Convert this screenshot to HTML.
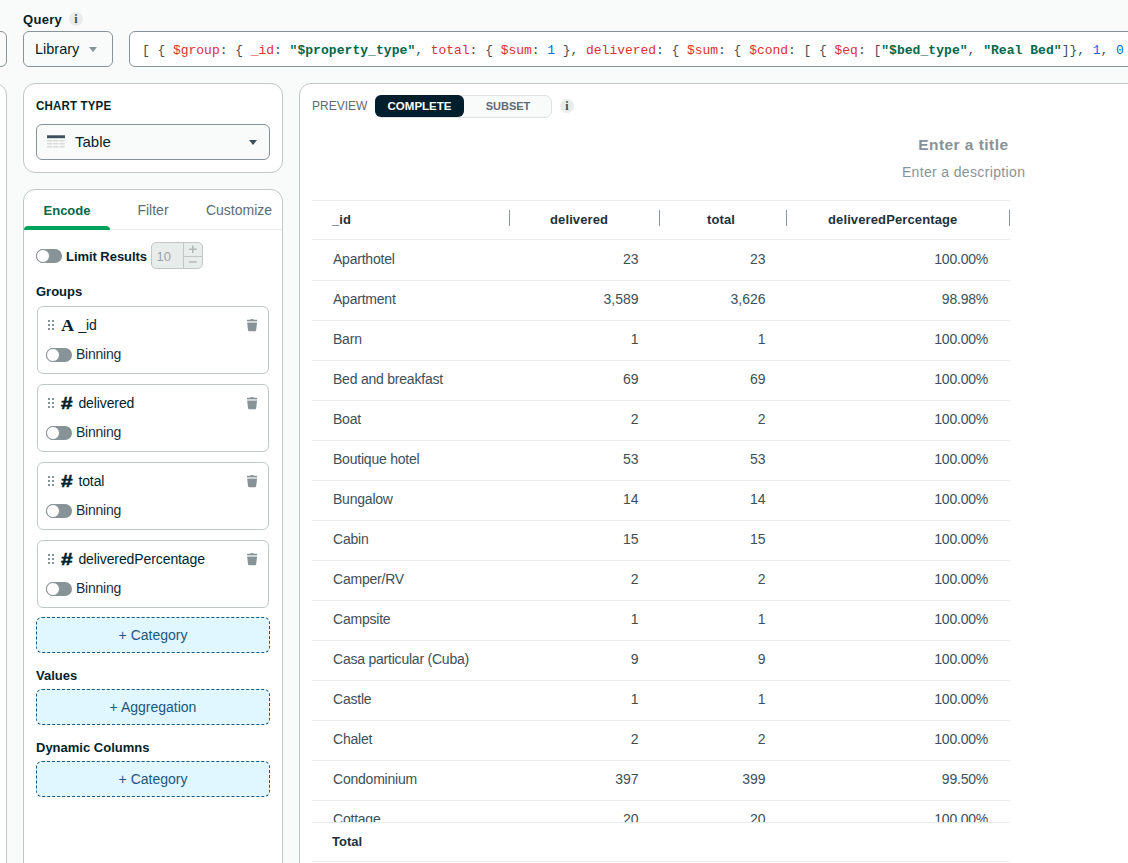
<!DOCTYPE html>
<html><head><meta charset="utf-8">
<style>
*{box-sizing:border-box;margin:0;padding:0}
html,body{width:1128px;height:863px;overflow:hidden;background:#f9fbfa;font-family:"Liberation Sans",sans-serif;color:#001e2b}
.abs{position:absolute}
.box{position:absolute;background:#fff;border:1px solid #889397}
.card{position:absolute;background:#fff;border:1px solid #c1c7c6;border-radius:12px}
.mono{font-family:"Liberation Mono",monospace}
.r{color:#db3030}.g{color:#00684a;font-weight:bold;letter-spacing:0.055px}.b{color:#016bf8}.k{color:#3d4f58}
.lbl{position:absolute;font-weight:bold;font-size:13px;line-height:16px;color:#001e2b;white-space:nowrap}
.tg{position:absolute;width:26px;height:14px;border-radius:7px;background:#889397}
.tg i{position:absolute;left:0;top:0;width:14px;height:14px;border-radius:7px;background:#fff;border:1px solid #889397}
.fc{position:absolute;left:37px;width:232px;height:68px;border:1px solid #c1c7c6;border-radius:6px;background:#fff}
.fc .nm{position:absolute;top:10px;font-size:14px;line-height:17px;color:#001e2b;white-space:nowrap}
.fc .bn{position:absolute;left:38px;top:39px;font-size:14px;letter-spacing:-0.25px;line-height:17px;color:#1c2d38}
.fc .tg{left:8px;top:41px}
.fc .dh{position:absolute;left:10px;top:13px;width:6px;height:10px;background:radial-gradient(circle at 1px 1px,#889397 1.1px,transparent 1.3px) 0 0/4px 4px}
.fc .tr{position:absolute;left:208.8px;top:12.1px}
.fc .ty{position:absolute;left:23px;top:9px;font-weight:bold;font-size:16px;line-height:18px;color:#001e2b;transform-origin:0 50%}
.fc .hs{transform:scaleX(1.3);top:10px;left:22.5px;-webkit-text-stroke:0.5px #001e2b}
.drop{position:absolute;left:36px;width:234px;height:36px;border:1px dashed #1a567e;border-radius:6px;background:#e1f7ff;color:#1a567e;font-size:14px;line-height:34px;text-align:center}
.row{position:absolute;left:312px;width:698px;height:41px;border-bottom:1px solid #e8edeb;font-size:14px;line-height:38px;color:#3d4f58;letter-spacing:-0.22px}
.row span{position:absolute;top:0;white-space:nowrap}
.row .c1{left:21px}.row .c2{right:371.5px;letter-spacing:0}.row .c3{right:244.5px;letter-spacing:0}.row .c4{right:22px}
.hd{font-weight:bold;color:#21313c;font-size:13px}
</style></head><body>

<!-- top bar -->
<div class="lbl" style="left:23px;top:12px;letter-spacing:0.3px">Query</div>
<div class="abs" style="left:69px;top:12px;width:14px;height:14px;border-radius:7px;background:#e8edeb;color:#3d4f58;font:bold 12px/14px 'Liberation Serif',serif;text-align:center">i</div>
<div class="box" style="left:-10px;top:31px;width:17px;height:36px;border-radius:6px;background:#f9fbfa"></div>
<div class="box" style="left:23px;top:31px;width:90px;height:36px;border-radius:6px;background:#f9fbfa"></div>
<div class="abs" style="left:35px;top:41px;font-size:14.5px;line-height:17px;color:#001e2b">Library</div>
<div class="abs" style="left:89px;top:47px;width:0;height:0;border-left:4.5px solid transparent;border-right:4.5px solid transparent;border-top:5px solid #889397"></div>
<div class="box" style="left:129px;top:31px;width:1010px;height:36px;border-radius:6px"></div>
<div class="abs mono k" style="left:142px;top:43px;font-size:13px;line-height:16px;white-space:pre;letter-spacing:-0.038px">[ { <span class="r">$group</span>: { <span class="r">_id</span>: <span class="g">"$property_type"</span>, <span class="r">total</span>: { <span class="r">$sum</span>: <span class="b">1</span> }, <span class="r">delivered</span>: { <span class="r">$sum</span>: { <span class="r">$cond</span>: [ { <span class="r">$eq</span>: [<span class="g">"$bed_type"</span>, <span class="g">"Real Bed"</span>]}, <span class="b">1</span>, <span class="b">0</span> ] } } } }</div>

<!-- left partial panel -->
<div class="card" style="left:-20px;top:83px;width:27px;height:800px"></div>

<!-- chart type card -->
<div class="card" style="left:23px;top:83px;width:260px;height:90px"></div>
<div class="lbl" style="left:36px;top:98px;font-size:13px;letter-spacing:0.2px;transform:scaleX(0.885);transform-origin:0 0">CHART TYPE</div>
<div class="box" style="left:36px;top:124px;width:234px;height:36px;border-radius:6px;background:#f9fbfa"></div>
<svg class="abs" style="left:47px;top:135px" width="18" height="14" viewBox="0 0 18 14"><rect x="0" y="0.3" width="18" height="2.9" fill="#3d4f58"/><g fill="#d3d9d7"><rect x="0" y="5" width="5.3" height="1.5"/><rect x="6.2" y="5" width="5.3" height="1.5"/><rect x="12.4" y="5" width="5.3" height="1.5"/><rect x="0" y="8" width="5.3" height="1.5"/><rect x="6.2" y="8" width="5.3" height="1.5"/><rect x="12.4" y="8" width="5.3" height="1.5"/><rect x="0" y="11" width="5.3" height="1.5"/><rect x="6.2" y="11" width="5.3" height="1.5"/><rect x="12.4" y="11" width="5.3" height="1.5"/></g></svg>
<div class="abs" style="left:75px;top:133px;font-size:15px;line-height:18px;color:#001e2b">Table</div>
<div class="abs" style="left:249px;top:140px;width:0;height:0;border-left:4.5px solid transparent;border-right:4.5px solid transparent;border-top:5.5px solid #3d4f58"></div>

<!-- encode card -->
<div class="card" style="left:23px;top:189px;width:260px;height:700px"></div>
<div class="abs" style="left:24px;top:229px;width:258px;height:1px;background:#e8edeb"></div>
<div class="abs" style="left:24px;top:226px;width:86px;height:4px;background:#00a35c;border-radius:4px 4px 0 0"></div>
<div class="abs" style="left:24px;top:202px;width:86px;text-align:center;font-size:13px;line-height:17px;color:#00684a;font-weight:bold">Encode</div>
<div class="abs" style="left:110px;top:202px;width:86px;text-align:center;font-size:14px;line-height:17px;color:#5c6c75">Filter</div>
<div class="abs" style="left:196px;top:202px;width:86px;text-align:center;font-size:14px;line-height:17px;color:#5c6c75">Customize</div>

<div class="tg" style="left:36px;top:249px"><i></i></div>
<div class="lbl" style="left:66px;top:248px;font-size:13px;line-height:17px;letter-spacing:-0.05px">Limit Results</div>
<div class="abs" style="left:151px;top:242px;width:52px;height:27px;border:1px solid #c1c7c6;border-radius:5px;background:#e8edeb"></div>
<div class="abs" style="left:183px;top:243px;width:1px;height:25px;background:#c1c7c6"></div>
<div class="abs" style="left:183px;top:255.5px;width:19px;height:1px;background:#c1c7c6"></div>
<div class="abs" style="left:156.5px;top:249px;font-size:13px;line-height:15px;color:#9aa4a5">10</div>
<svg class="abs" style="left:188px;top:245px" width="10" height="20" viewBox="0 0 10 20"><path d="M1 4.3h7.6M4.8 0.6v7.4M1 17h7.6" stroke="#b0b8b8" stroke-width="1.6" fill="none"/></svg>


<div class="lbl" style="left:36px;top:284px">Groups</div>

<div class="fc" style="top:306px"><i class="dh"></i><span class="ty" style="font-family:'Liberation Serif',serif;font-size:16px;left:22.5px;top:10px;transform:scaleX(1.13)">A</span><svg class="tr" width="11" height="13" viewBox="0 0 11 13"><path fill="#889397" d="M0 2.3V1.3Q0 .8.5 .8H3Q3.6 0 5.1 0T7.2 .8H9.7Q10.2 .8 10.2 1.3V2.3Z"/><rect x=".1" y="2.3" width="10" height="1.7" fill="#cbd1d3"/><path fill="#889397" d="M.2 4H10L9.2 11Q9.1 12.2 8 12.2H2.2Q1.1 12.2 1 11Z"/></svg><span class="nm" style="left:40.4px;letter-spacing:-0.1px">_id</span><div class="tg"><i></i></div><span class="bn">Binning</span></div>
<div class="fc" style="top:384px"><i class="dh"></i><span class="ty hs">#</span><svg class="tr" width="11" height="13" viewBox="0 0 11 13"><path fill="#889397" d="M0 2.3V1.3Q0 .8.5 .8H3Q3.6 0 5.1 0T7.2 .8H9.7Q10.2 .8 10.2 1.3V2.3Z"/><rect x=".1" y="2.3" width="10" height="1.7" fill="#cbd1d3"/><path fill="#889397" d="M.2 4H10L9.2 11Q9.1 12.2 8 12.2H2.2Q1.1 12.2 1 11Z"/></svg><span class="nm" style="left:40.4px;letter-spacing:-0.1px">delivered</span><div class="tg"><i></i></div><span class="bn">Binning</span></div>
<div class="fc" style="top:462px"><i class="dh"></i><span class="ty hs">#</span><svg class="tr" width="11" height="13" viewBox="0 0 11 13"><path fill="#889397" d="M0 2.3V1.3Q0 .8.5 .8H3Q3.6 0 5.1 0T7.2 .8H9.7Q10.2 .8 10.2 1.3V2.3Z"/><rect x=".1" y="2.3" width="10" height="1.7" fill="#cbd1d3"/><path fill="#889397" d="M.2 4H10L9.2 11Q9.1 12.2 8 12.2H2.2Q1.1 12.2 1 11Z"/></svg><span class="nm" style="left:40.4px;letter-spacing:-0.1px">total</span><div class="tg"><i></i></div><span class="bn">Binning</span></div>
<div class="fc" style="top:540px"><i class="dh"></i><span class="ty hs">#</span><svg class="tr" width="11" height="13" viewBox="0 0 11 13"><path fill="#889397" d="M0 2.3V1.3Q0 .8.5 .8H3Q3.6 0 5.1 0T7.2 .8H9.7Q10.2 .8 10.2 1.3V2.3Z"/><rect x=".1" y="2.3" width="10" height="1.7" fill="#cbd1d3"/><path fill="#889397" d="M.2 4H10L9.2 11Q9.1 12.2 8 12.2H2.2Q1.1 12.2 1 11Z"/></svg><span class="nm" style="left:40.4px;letter-spacing:-0.1px">deliveredPercentage</span><div class="tg"><i></i></div><span class="bn">Binning</span></div>

<div class="drop" style="top:617px">+ Category</div>
<div class="lbl" style="left:36px;top:668px">Values</div>
<div class="drop" style="top:689px">+ Aggregation</div>
<div class="lbl" style="left:36px;top:740px">Dynamic Columns</div>
<div class="drop" style="top:761px">+ Category</div>

<!-- preview panel -->
<div class="card" style="left:299px;top:83px;width:900px;height:800px;border-radius:12px 0 0 0"></div>
<div class="abs" style="left:312px;top:98px;font-size:12px;line-height:16px;color:#5c6c75">PREVIEW</div>
<div class="abs" style="left:375px;top:95px;width:177px;height:23px;border:1px solid #dde2e1;border-radius:7px;background:#f9fbfa"></div>
<div class="abs" style="left:375px;top:95px;width:89px;height:22px;border-radius:6px;background:#001e2b;color:#fff;font-size:11.5px;font-weight:bold;line-height:22px;text-align:center">COMPLETE</div>
<div class="abs" style="left:464px;top:95px;width:88px;height:22px;color:#5c6c75;font-size:11px;font-weight:bold;line-height:22px;text-align:center">SUBSET</div>
<div class="abs" style="left:560px;top:99px;width:14px;height:14px;border-radius:7px;background:#e8edeb;color:#3d4f58;font:bold 12px/14px 'Liberation Serif',serif;text-align:center">i</div>

<div class="abs" style="left:700px;top:136px;width:308.5px;text-align:right;font-size:15.5px;font-weight:bold;line-height:18px;letter-spacing:0.45px;color:#889397">Enter a title</div>
<div class="abs" style="left:700px;top:164px;width:325.3px;text-align:right;font-size:14px;line-height:17px;letter-spacing:0.35px;color:#889397">Enter a description</div>

<!-- table -->
<div class="row hd" style="top:200px;line-height:37px;height:40px;border-top:1px solid #e8edeb;letter-spacing:0.12px"><span class="c1" style="left:20px">_id</span><span style="left:238px">delivered</span><span style="left:395px">total</span><span style="left:516px">deliveredPercentage</span></div>
<div class="abs" style="left:509px;top:210px;width:1px;height:16px;background:#889397"></div>
<div class="abs" style="left:659px;top:210px;width:1px;height:16px;background:#889397"></div>
<div class="abs" style="left:786px;top:210px;width:1px;height:16px;background:#889397"></div>
<div class="abs" style="left:1009px;top:210px;width:1px;height:16px;background:#889397"></div>
<div class="abs" style="left:312px;top:240px;width:698px;height:583px;overflow:hidden">
<div class="row" style="left:0;top:0"><span class="c1">Aparthotel</span><span class="c2">23</span><span class="c3">23</span><span class="c4">100.00%</span></div>
<div class="row" style="left:0;top:40px"><span class="c1">Apartment</span><span class="c2">3,589</span><span class="c3">3,626</span><span class="c4">98.98%</span></div>
<div class="row" style="left:0;top:80px"><span class="c1">Barn</span><span class="c2">1</span><span class="c3">1</span><span class="c4">100.00%</span></div>
<div class="row" style="left:0;top:120px"><span class="c1">Bed and breakfast</span><span class="c2">69</span><span class="c3">69</span><span class="c4">100.00%</span></div>
<div class="row" style="left:0;top:160px"><span class="c1">Boat</span><span class="c2">2</span><span class="c3">2</span><span class="c4">100.00%</span></div>
<div class="row" style="left:0;top:200px"><span class="c1">Boutique hotel</span><span class="c2">53</span><span class="c3">53</span><span class="c4">100.00%</span></div>
<div class="row" style="left:0;top:240px"><span class="c1">Bungalow</span><span class="c2">14</span><span class="c3">14</span><span class="c4">100.00%</span></div>
<div class="row" style="left:0;top:280px"><span class="c1">Cabin</span><span class="c2">15</span><span class="c3">15</span><span class="c4">100.00%</span></div>
<div class="row" style="left:0;top:320px"><span class="c1">Camper/RV</span><span class="c2">2</span><span class="c3">2</span><span class="c4">100.00%</span></div>
<div class="row" style="left:0;top:360px"><span class="c1">Campsite</span><span class="c2">1</span><span class="c3">1</span><span class="c4">100.00%</span></div>
<div class="row" style="left:0;top:400px"><span class="c1">Casa particular (Cuba)</span><span class="c2">9</span><span class="c3">9</span><span class="c4">100.00%</span></div>
<div class="row" style="left:0;top:440px"><span class="c1">Castle</span><span class="c2">1</span><span class="c3">1</span><span class="c4">100.00%</span></div>
<div class="row" style="left:0;top:480px"><span class="c1">Chalet</span><span class="c2">2</span><span class="c3">2</span><span class="c4">100.00%</span></div>
<div class="row" style="left:0;top:520px"><span class="c1">Condominium</span><span class="c2">397</span><span class="c3">399</span><span class="c4">99.50%</span></div>
<div class="row" style="left:0;top:560px"><span class="c1">Cottage</span><span class="c2">20</span><span class="c3">20</span><span class="c4">100.00%</span></div>
</div>
<div class="row hd" style="top:822px;line-height:38px;height:40px;border-top:1px solid #e8edeb;border-bottom:1px solid #e8edeb;background:#fff;letter-spacing:0"><span class="c1" style="left:20px">Total</span></div>

</body></html>
